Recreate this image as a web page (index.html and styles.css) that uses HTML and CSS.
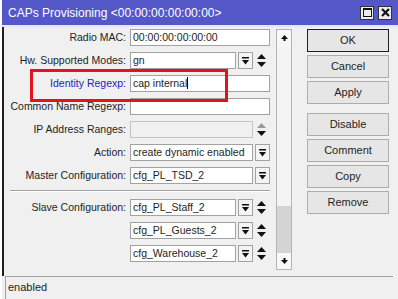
FILE: index.html
```html
<!DOCTYPE html>
<html lang="en">
<head>
    <meta charset="UTF-8">
    <title>CAPs Provisioning</title>
    <link rel="stylesheet" href="styles.css">
</head>
<body>
    <div class="window">
        <!-- Title bar -->
        <div class="titlebar">
            <span class="title">CAPs Provisioning &lt;00:00:00:00:00:00&gt;</span>
            <span class="tbtn">
                <svg width="9" height="9" viewBox="0 0 9 9"><rect x="0.5" y="0.5" width="8" height="8" fill="none" stroke="#111" stroke-width="1"/><rect x="0" y="0" width="9" height="2" fill="#111"/></svg>
            </span>
            <span class="tbtn">
                <svg width="9" height="9" viewBox="0 0 9 9"><path d="M1 1 L8 8 M8 1 L1 8" stroke="#111" stroke-width="2.2"/></svg>
            </span>
        </div>

        <div class="main">
            <!-- Form -->
            <div class="form">
                <div class="row">
                    <label>Radio MAC:</label>
                    <div class="field"><div class="input">00:00:00:00:00:00</div></div>
                </div>
                <div class="row">
                    <label>Hw. Supported Modes:</label>
                    <div class="field">
                        <div class="input">gn</div>
                        <div class="dd"><svg width="7" height="8" viewBox="0 0 7 8"><rect x="0" y="0" width="7" height="1.5" fill="#111"/><path d="M0 3 L7 3 L3.5 7.5 Z" fill="#111"/></svg></div>
                        <div class="ud"><svg width="9" height="13" viewBox="0 0 9 13"><path d="M0 5 L9 5 L4.5 0 Z" fill="#111"/><path d="M0 8 L9 8 L4.5 13 Z" fill="#111"/></svg></div>
                    </div>
                </div>
                <div class="row">
                    <label class="active">Identity Regexp:</label>
                    <div class="field"><div class="input">cap internal<span class="caret"></span></div></div>
                </div>
                <div class="row">
                    <label>Common Name Regexp:</label>
                    <div class="field"><div class="input"></div></div>
                </div>
                <div class="row">
                    <label>IP Address Ranges:</label>
                    <div class="field">
                        <div class="input disabled"></div>
                        <div class="ud"><svg width="9" height="13" viewBox="0 0 9 13"><path d="M0 5 L9 5 L4.5 0 Z" fill="#9a9a9a"/><path d="M0 8 L9 8 L4.5 13 Z" fill="#111"/></svg></div>
                    </div>
                </div>
                <div class="row">
                    <label>Action:</label>
                    <div class="field">
                        <div class="input">create dynamic enabled</div>
                        <div class="dd"><svg width="7" height="8" viewBox="0 0 7 8"><rect x="0" y="0" width="7" height="1.5" fill="#111"/><path d="M0 3 L7 3 L3.5 7.5 Z" fill="#111"/></svg></div>
                    </div>
                </div>
                <div class="row">
                    <label>Master Configuration:</label>
                    <div class="field">
                        <div class="input">cfg_PL_TSD_2</div>
                        <div class="dd"><svg width="7" height="8" viewBox="0 0 7 8"><rect x="0" y="0" width="7" height="1.5" fill="#111"/><path d="M0 3 L7 3 L3.5 7.5 Z" fill="#111"/></svg></div>
                    </div>
                </div>

                <div class="separator"></div>

                <div class="row">
                    <label>Slave Configuration:</label>
                    <div class="field">
                        <div class="input">cfg_PL_Staff_2</div>
                        <div class="dd"><svg width="7" height="8" viewBox="0 0 7 8"><rect x="0" y="0" width="7" height="1.5" fill="#111"/><path d="M0 3 L7 3 L3.5 7.5 Z" fill="#111"/></svg></div>
                        <div class="ud"><svg width="9" height="13" viewBox="0 0 9 13"><path d="M0 5 L9 5 L4.5 0 Z" fill="#111"/><path d="M0 8 L9 8 L4.5 13 Z" fill="#111"/></svg></div>
                    </div>
                </div>
                <div class="row">
                    <label></label>
                    <div class="field">
                        <div class="input">cfg_PL_Guests_2</div>
                        <div class="dd"><svg width="7" height="8" viewBox="0 0 7 8"><rect x="0" y="0" width="7" height="1.5" fill="#111"/><path d="M0 3 L7 3 L3.5 7.5 Z" fill="#111"/></svg></div>
                        <div class="ud"><svg width="9" height="13" viewBox="0 0 9 13"><path d="M0 5 L9 5 L4.5 0 Z" fill="#111"/><path d="M0 8 L9 8 L4.5 13 Z" fill="#111"/></svg></div>
                    </div>
                </div>
                <div class="row">
                    <label></label>
                    <div class="field">
                        <div class="input">cfg_Warehouse_2</div>
                        <div class="dd"><svg width="7" height="8" viewBox="0 0 7 8"><rect x="0" y="0" width="7" height="1.5" fill="#111"/><path d="M0 3 L7 3 L3.5 7.5 Z" fill="#111"/></svg></div>
                        <div class="ud"><svg width="9" height="13" viewBox="0 0 9 13"><path d="M0 5 L9 5 L4.5 0 Z" fill="#111"/><path d="M0 8 L9 8 L4.5 13 Z" fill="#111"/></svg></div>
                    </div>
                </div>

                <!-- Highlight annotation -->
                <div class="highlight"></div>
            </div>

            <!-- Scrollbar -->
            <div class="scrollbar">
                <div class="sbtn"><svg width="7" height="6" viewBox="0 0 7 6"><path d="M0 4 L7 4 L3.5 0 Z" fill="#111"/><rect x="2.5" y="4" width="2" height="2" fill="#111"/></svg></div>
                <div class="track"></div>
                <div class="thumb"></div>
                <div class="sbtn"><svg width="7" height="6" viewBox="0 0 7 6"><rect x="2.5" y="0" width="2" height="2" fill="#111"/><path d="M0 2 L7 2 L3.5 6 Z" fill="#111"/></svg></div>
            </div>

            <!-- Buttons -->
            <div class="buttons">
                <div class="btn default">OK</div>
                <div class="btn">Cancel</div>
                <div class="btn">Apply</div>
                <div class="btn group">Disable</div>
                <div class="btn">Comment</div>
                <div class="btn">Copy</div>
                <div class="btn">Remove</div>
            </div>
        </div>

        <!-- Status bar -->
        <div class="status">enabled</div>
    </div>
</body>
</html>
```

FILE: styles.css
```css
/* Page and window frame */
body {
    margin: 0;
    background: #ffffff;
    font-family: "Liberation Sans", Arial, sans-serif;
    font-size: 10.5px;
    color: #1e1e1e;
    overflow: hidden;
}

.window {
    margin-left: 2px;
    height: 299px;
    background: #f0f0f0;
    display: flex;
    flex-direction: column;
}

/* Title bar */
.titlebar {
    height: 25px;
    background: #5457c8;
    border-bottom: 2px solid #e6e6f2;
    display: flex;
    align-items: center;
    padding: 0 6px 0 6px;
    gap: 4px;
}

.title {
    flex: 1;
    color: #ffffff;
    font-size: 12px;
}

.tbtn {
    width: 12px;
    height: 12px;
    background: #ececec;
    border: 1px solid #333;
    display: flex;
    align-items: center;
    justify-content: center;
}

/* Main area */
.main {
    display: flex;
    border-left: 2px solid #1e1e1e;
    padding-top: 2px;
    flex: 1;
}

.form {
    width: 266px;
    position: relative;
}

.row {
    display: flex;
    height: 17px;
    margin-bottom: 6px;
}

.row label {
    width: 122px;
    text-align: right;
    line-height: 17px;
    margin-right: 4px;
    white-space: nowrap;
}

.row label.active {
    color: #2323c3;
}

.field {
    width: 140px;
    display: flex;
}

.input {
    flex: 1;
    min-width: 0;
    box-sizing: border-box;
    height: 17px;
    background: #ffffff;
    border: 1px solid #a2a2a2;
    padding-left: 2px;
    line-height: 15px;
    white-space: nowrap;
    overflow: hidden;
}

.input.disabled {
    background: #f0f0f0;
    border-color: #c4c4c4;
}

.caret {
    display: inline-block;
    width: 1px;
    height: 12px;
    background: #000;
    vertical-align: -2px;
}

.dd {
    width: 15px;
    height: 17px;
    box-sizing: border-box;
    margin-left: 2px;
    background: #f4f4f4;
    border: 1px solid #a2a2a2;
    display: flex;
    align-items: center;
    justify-content: center;
}

.ud {
    width: 17px;
    display: flex;
    align-items: center;
    justify-content: center;
}

.separator {
    margin: 3px 0 7px 6px;
    width: 260px;
    border-top: 1px solid #a0a0a0;
    border-bottom: 1px solid #ffffff;
}

.highlight {
    position: absolute;
    left: 26px;
    top: 40px;
    width: 192px;
    height: 27px;
    border: 3px solid #e3121c;
}

/* Scrollbar */
.scrollbar {
    margin-left: 6px;
    width: 16px;
    height: 241px;
    box-sizing: border-box;
    border: 1px solid #b4b4b4;
    background: #f4f4f4;
    display: flex;
    flex-direction: column;
}

.sbtn {
    height: 16px;
    display: flex;
    align-items: center;
    justify-content: center;
    background: #f8f8f8;
}

.track {
    flex: 1;
}

.thumb {
    height: 47px;
    background: #d4d4d4;
}

/* Buttons */
.buttons {
    margin-left: 15px;
    width: 82px;
    display: flex;
    flex-direction: column;
    gap: 3px;
}

.btn {
    height: 23px;
    box-sizing: border-box;
    background: #e6e6e6;
    border: 1px solid #adadad;
    text-align: center;
    line-height: 21px;
    font-size: 11px;
}

.btn.default {
    border-color: #1e1e1e;
}

.btn.group {
    margin-top: 6px;
}

/* Status bar */
.status {
    height: 22px;
    margin-left: 3px;
    margin-right: 5px;
    border-top: 1px solid #a0a0a0;
    border-left: 1px solid #a0a0a0;
    padding-left: 2px;
    line-height: 20px;
    font-size: 11px;
}
```
